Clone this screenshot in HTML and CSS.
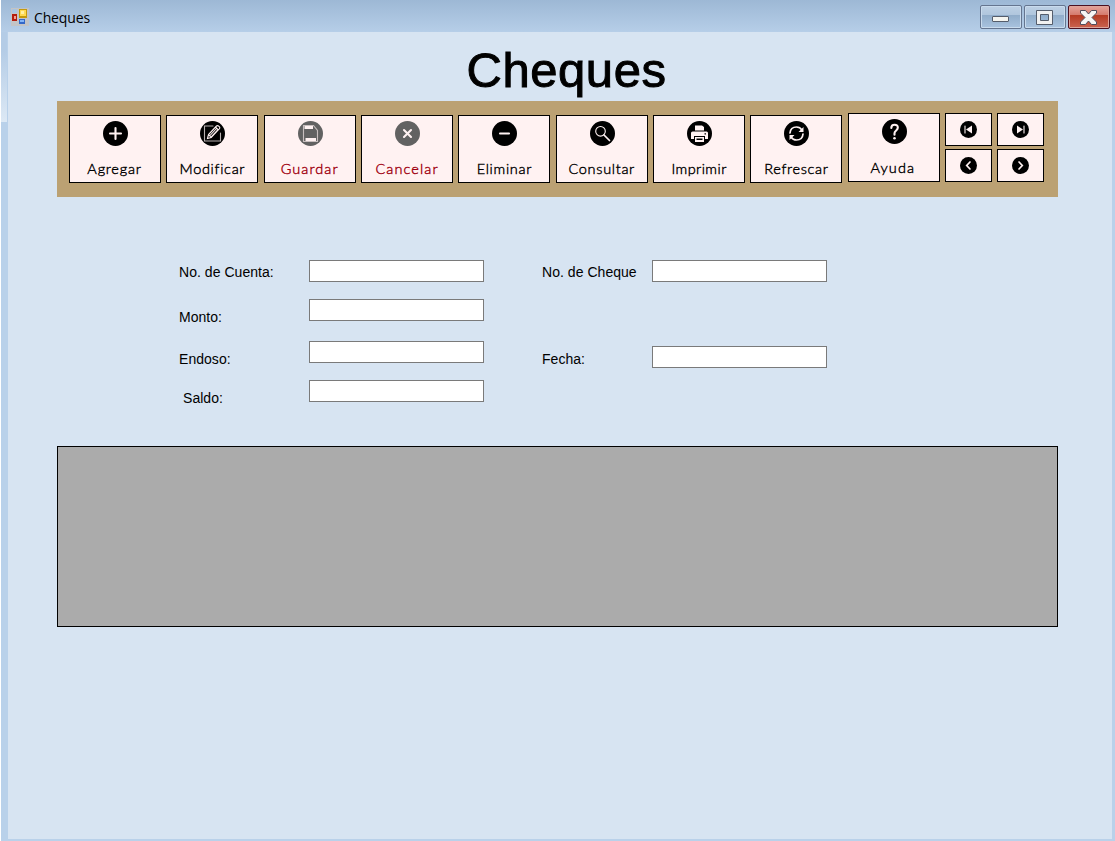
FILE: index.html
```html
<!DOCTYPE html>
<html lang="es">
<head>
<meta charset="utf-8">
<title>Cheques</title>
<link rel="stylesheet" href="styles.css">
</head>
<body>
<div class="window">
  <header class="titlebar">
    <svg class="app-icon" width="18" height="18" viewBox="0 0 18 18"><path fill="#c3c4c6" d="M0 0h18v18H0z"/><path fill="#a9c4e0" d="M1 1h5v4H1z"/><path fill="#b51c0c" d="M1 6h5v7H1z"/><path fill="#f0a090" d="M3 8h2v3H3z"/><path fill="#c59a0c" d="M8 1h8v9H8z"/><path fill="#ffda50" d="M9 2h6v6H9z"/><path fill="#fff0a0" d="M10 3h3v3h-3z"/><path fill="#3468c8" d="M8 11h6v5H8z"/><path fill="#83b5f7" d="M9 12h4v2H9z"/></svg>
    <span class="window-title">Cheques</span>
    <div class="controls">
      <span class="control"><svg width="40" height="22"><rect x="11.5" y="10.5" width="16" height="5" rx=".5" fill="#f4f4ef" stroke="#555d6b"/></svg></span>
      <span class="control"><svg width="40" height="22"><path fill="#f1f1f1" stroke="#555d6b" fill-rule="evenodd" d="M11.500 4.500h16v14h-16zM15.500 8.500v6h8v-6z"/></svg></span>
      <span class="control close"><svg width="40" height="22"><path fill="#f6f6f6" stroke="#514d5c" stroke-linejoin="round" d="M11.500 4.500h5l3 3.500 3-3.500h5v2.500l-4.500 4.500 4.500 4.500v2.500h-5l-3-3.500-3 3.500h-5v-2.500l4.500-4.500-4.500-4.500z"/></svg></span>
    </div>
  </header>
  <main class="client">
    <h1 class="heading">Cheques</h1>
    <nav class="toolbar">
      <button class="tool"><svg class="icon" viewBox="0 0 25 25"><circle cx="12.500" cy="12.500" r="12.500"/><path class="line bold" d="M12.500 7v11M7 12.500h11"/></svg><span class="t-agregar">Agregar</span></button>
      <button class="tool"><svg class="icon" viewBox="0 0 25 25"><circle cx="12.500" cy="12.500" r="12.500"/><path class="line frame" d="M13 5H4.500v15h16v-8"/><path class="line" d="M7.500 17.500l1-4 8-8.500q1-1 2.500.3t.2 2.700l-8 8.500zM8.500 13.500l2.700 3M15.500 6l2.800 2.800M10 14.500l6.500-7M11.500 15.500l6.500-7"/></svg><span class="t-modificar">Modificar</span></button>
      <button class="tool off"><svg class="icon" viewBox="0 0 25 25"><circle cx="12.500" cy="12.500" r="12.500"/><path class="line save" d="M5.500 4.500h10l4 5v11h-14z"/><path class="solid" d="M6.500 5h8.500v3H6.500zM7.500 17h10.500v3H7.500z"/></svg><span class="t-guardar">Guardar</span></button>
      <button class="tool off"><svg class="icon" viewBox="0 0 25 25"><circle cx="12.500" cy="12.500" r="12.500"/><path class="line bold" d="M9 9l7 7M16 9l-7 7"/></svg><span class="t-cancelar">Cancelar</span></button>
      <button class="tool"><svg class="icon" viewBox="0 0 25 25"><circle cx="12.500" cy="12.500" r="12.500"/><path class="line bold" d="M8 12.500h9"/></svg><span class="t-eliminar">Eliminar</span></button>
      <button class="tool"><svg class="icon" viewBox="0 0 25 25"><circle cx="12.500" cy="12.500" r="12.500"/><circle class="line" cx="10.500" cy="10.300" r="4.800"/><path class="line thick" d="M14 14l5.500 5.500"/></svg><span class="t-consultar">Consultar</span></button>
      <button class="tool"><svg class="icon" viewBox="0 0 25 25"><circle cx="12.500" cy="12.500" r="12.500"/><path class="solid" d="M8 4.500h7l2 1.500v3.500H8zM5.500 10.500h14q1.500 0 1.500 1.500v6h-3v-3H7v3H4v-6q0-1.500 1.500-1.500zM8 16h9v5H8z"/><path d="M9.500 17.500h6v1.500h-6zM17.500 12.300h1.500v1.300h-1.500z"/></svg><span class="t-imprimir">Imprimir</span></button>
      <button class="tool"><svg class="icon" viewBox="0 0 25 25"><circle cx="12.500" cy="12.500" r="12.500"/><path class="line thick" d="M6 12q.5-6 6.500-6 3.500 0 5.500 3M19 13q-.5 6-6.500 6-3.500 0-5.500-3"/><path class="solid" d="M19.500 6v5h-5zM5.500 19v-5h5z"/></svg><span class="t-refrescar">Refrescar</span></button>
      <button class="tool help"><svg class="icon" viewBox="0 0 25 25"><circle cx="12.500" cy="12.500" r="12.500"/><path class="line bold" d="M9.300 9q0-3.200 3.300-3.200t3.200 3c0 2.600-3.300 2.700-3.300 5.500v1.500"/><circle class="solid" cx="12.500" cy="19.300" r="1.300"/></svg><span class="t-ayuda">Ayuda</span></button>
      <div class="pager">
        <button class="step"><svg viewBox="0 0 17 17"><circle cx="8.500" cy="8.500" r="8.500"/><path class="solid" d="M12 4.500v8l-6-4z"/><path class="line" d="M5 5v7"/></svg></button>
        <button class="step"><svg viewBox="0 0 17 17"><circle cx="8.500" cy="8.500" r="8.500"/><path class="solid" d="M5 4.500v8l6-4z"/><path class="line" d="M12 5v7"/></svg></button>
        <button class="step"><svg viewBox="0 0 17 17"><circle cx="8.500" cy="8.500" r="8.500"/><path class="line thick" d="M10 5L6.700 8.500 10 12"/></svg></button>
        <button class="step"><svg viewBox="0 0 17 17"><circle cx="8.500" cy="8.500" r="8.500"/><path class="line thick" d="M7 5l3.300 3.500L7 12"/></svg></button>
      </div>
    </nav>
    <form class="form">
      <div class="column left">
        <label class="field account"><span>No. de Cuenta:</span><input type="text"></label>
        <label class="field amount"><span>Monto:</span><input type="text"></label>
        <label class="field endorse"><span>Endoso:</span><input type="text"></label>
        <label class="field balance"><span>Saldo:</span><input type="text"></label>
      </div>
      <div class="column right">
        <label class="field cheque"><span>No. de Cheque</span><input type="text"></label>
        <label class="field date"><span>Fecha:</span><input type="text"></label>
      </div>
    </form>
    <section class="datagrid"></section>
  </main>
</div>
</body>
</html>
```
FILE: styles.css
```css
* { box-sizing: border-box; }
body { margin: 0; background: #fff; font-family: "Liberation Sans", Arial, sans-serif; }
.window {
  height: 841px;
  margin-left: 1px;
  padding: 0 3px 2px 7px;
  background:
    linear-gradient(#9db8d5, #b6cee8) 0 0 / 100% 32px no-repeat,
    linear-gradient(#b4cce6 20%, #dde9f5) 0 32px / 6px 90px no-repeat,
    #b9d1ea;
}
.titlebar { display: flex; height: 32px; }
.app-icon { margin: 8px 0 0 3px; }
.window-title { margin: 8px 0 0 5px; font: 14px/20px "Open Sans", "Noto Sans", sans-serif; letter-spacing: -.15px; color: #000; }
.controls { display: flex; gap: 2px; margin: 5px 2px 0 auto; }
.control {
  width: 42px;
  height: 24px;
  border: 1px solid #65758f;
  border-radius: 2px;
  background: linear-gradient(#bdd0e4, #b0c6dd 42%, #91adca 43%, #a9c3df);
  box-shadow: inset 0 0 0 1px #c9dbed;
}
.control svg { display: block; }
.close {
  border-color: #4c1020;
  background: linear-gradient(#e5a49b, #d4796b 42%, #b53b24 43%, #ca6350);
  box-shadow: inset 0 0 0 1px #dda49a;
}
.client { height: 807px; padding-left: 49px; background: #d7e4f2; }
.heading {
  height: 69px;
  margin: 0;
  padding: 10px 0 0 409.5px;
  font-size: 49px;
  line-height: 56px;
  font-weight: 400;
  letter-spacing: .55px;
  -webkit-text-stroke: 1px #000;
}
.toolbar { display: flex; gap: 5.35px; width: 1001px; height: 96px; padding: 12px; background: #bba173; }
button { margin: 0; padding: 0; border: 1px solid #000; background: #fff2f2; font-family: inherit; }
.tool { display: flex; flex: none; flex-direction: column; align-items: center; width: 92px; height: 68px; margin-top: 2px; padding-top: 5px; }
.icon { flex: none; width: 25px; height: 25px; margin-left: .8px; }
.tool span { margin-top: 13px; font: 300 14.5px/20px Lato, sans-serif; white-space: nowrap; color: #000; letter-spacing: .7px; -webkit-text-stroke: .4px; }
.off .icon { fill: #626262; }
.tool.off span { color: #a00010; letter-spacing: 1.1px; }
.tool .t-agregar { margin-right: 1px; letter-spacing: .8px; }
.tool .t-imprimir { letter-spacing: .45px; }
.help { height: 69px; margin-top: 0; }
.tool .t-ayuda { margin-right: 2px; margin-top: 14px; letter-spacing: 1.1px; }
.line { fill: none; stroke: #fff2f2; stroke-width: 1.1; stroke-linecap: round; }
.thick { stroke-width: 1.7; }
.bold { stroke-width: 2.1; }
.frame { stroke: #b7b0b0; }
.save { stroke: #c8bfbf; }
.solid { fill: #fff2f2; }
.pager { display: grid; grid-template-columns: 47px 47px; grid-template-rows: 33px 33px; gap: 3px 5px; }
.step { display: flex; align-items: flex-start; padding: 7px 0 0 14px; }
.step svg { display: block; width: 17px; height: 17px; }
.form { display: flex; height: 249px; padding-left: 122px; }
.field { display: flex; align-items: flex-start; height: 22px; font-size: 14px; line-height: 18px; letter-spacing: .04px; }
.field span { white-space: nowrap; }
.field input { width: 175px; height: 22px; padding: 0; border: 1px solid #7a7a7a; border-radius: 0; background: #fff; }
.left { width: 363px; padding-top: 63px; }
.left .field span { width: 130px; }
.right { padding-top: 63px; }
.right .field span { width: 110px; }
.account span, .cheque span { margin-top: 3px; }
.amount { margin-top: 17px; }
.amount span { margin-top: 9px; }
.endorse { margin-top: 20px; }
.endorse span { margin-top: 9px; }
.balance { margin-top: 17px; }
.balance span { margin-top: 9px; padding-left: 4px; }
.date { margin-top: 64px; }
.date span { margin-top: 4px; }
.datagrid { width: 1001px; height: 181px; border: 1px solid #000; background: #ababab; }
```
